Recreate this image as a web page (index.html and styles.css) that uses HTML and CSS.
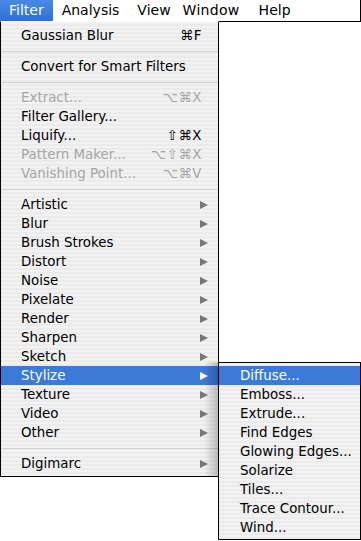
FILE: index.html
```html
<!DOCTYPE html>
<html>
<head>
<meta charset="utf-8">
<link rel="stylesheet" href="styles.css">
</head>
<body>
<div class="menubar">
  <span class="mb-item active">Filter</span>
  <span class="mb-item">Analysis</span>
  <span class="mb-item">View</span>
  <span class="mb-item">Window</span>
  <span class="mb-item">Help</span>
</div>
<div class="menu">
  <div class="item"><span>Gaussian Blur</span><span class="key">⌘F</span></div>
  <div class="sep"></div>
  <div class="item"><span>Convert for Smart Filters</span></div>
  <div class="sep"></div>
  <div class="item disabled"><span>Extract...</span><span class="key">⌥⌘X</span></div>
  <div class="item"><span>Filter Gallery...</span></div>
  <div class="item"><span>Liquify...</span><span class="key">⇧⌘X</span></div>
  <div class="item disabled"><span>Pattern Maker...</span><span class="key">⌥⇧⌘X</span></div>
  <div class="item disabled"><span>Vanishing Point...</span><span class="key">⌥⌘V</span></div>
  <div class="sep"></div>
  <div class="item sub"><span>Artistic</span><i class="arrow"></i></div>
  <div class="item sub"><span>Blur</span><i class="arrow"></i></div>
  <div class="item sub"><span>Brush Strokes</span><i class="arrow"></i></div>
  <div class="item sub"><span>Distort</span><i class="arrow"></i></div>
  <div class="item sub"><span>Noise</span><i class="arrow"></i></div>
  <div class="item sub"><span>Pixelate</span><i class="arrow"></i></div>
  <div class="item sub"><span>Render</span><i class="arrow"></i></div>
  <div class="item sub"><span>Sharpen</span><i class="arrow"></i></div>
  <div class="item sub"><span>Sketch</span><i class="arrow"></i></div>
  <div class="item sub selected"><span>Stylize</span><i class="arrow"></i>
    <div class="submenu">
      <div class="item selected"><span>Diffuse...</span></div>
      <div class="item"><span>Emboss...</span></div>
      <div class="item"><span>Extrude...</span></div>
      <div class="item"><span>Find Edges</span></div>
      <div class="item"><span>Glowing Edges...</span></div>
      <div class="item"><span>Solarize</span></div>
      <div class="item"><span>Tiles...</span></div>
      <div class="item"><span>Trace Contour...</span></div>
      <div class="item"><span>Wind...</span></div>
    </div>
  </div>
  <div class="item sub"><span>Texture</span><i class="arrow"></i></div>
  <div class="item sub"><span>Video</span><i class="arrow"></i></div>
  <div class="item sub"><span>Other</span><i class="arrow"></i></div>
  <div class="sep"></div>
  <div class="item sub"><span>Digimarc</span><i class="arrow"></i></div>
</div>
</body>
</html>
```
FILE: styles.css
```css
html, body {
  margin: 0;
  padding: 0;
  background: #ffffff;
}
body {
  font-family: "DejaVu Sans", "Liberation Sans", sans-serif;
  color: #000;
  width: 361px;
  height: 541px;
  overflow: hidden;
}
.menubar {
  display: flex;
  height: 21px;
  border-bottom: 1px solid #000;
  border-right: 1px solid #000;
  background: #fff;
  font-size: 14px;
  line-height: 21px;
}
.mb-item {
  padding: 0 9px;
}
.mb-item:nth-child(3) { padding-right: 3px; }
.mb-item:nth-child(4) { padding-right: 10px; letter-spacing: 0.3px; }
.mb-item.active {
  background: linear-gradient(#4a8ae6, #2f6fd3);
  color: #fff;
}
.menu {
  position: relative;
  width: 217px;
  margin-top: -1px;
  border: 1px solid #000;
  border-top: 1px solid #fff;
  padding: 4px 0 3px;
  background: repeating-linear-gradient(to bottom, #f2f2f2 0 2px, #ebebeb 2px 4px);
  font-size: 13.4px;
}
.menu::after {
  content: "";
  position: absolute;
  right: 0;
  top: 340px;
  bottom: 0;
  width: 14px;
  background: linear-gradient(to right, rgba(0,0,0,0), rgba(0,0,0,0.22));
  pointer-events: none;
}
.item {
  position: relative;
  display: flex;
  justify-content: space-between;
  align-items: center;
  height: 19px;
  line-height: 19px;
  padding: 0 16px 0 20px;
  white-space: nowrap;
}
.item.sub {
  padding-right: 10px;
}
.item.disabled {
  color: #a6a6a6;
}
.item.disabled .key {
  color: #a6a6a6;
}
.key {
  letter-spacing: 0.5px;
}
.item.selected {
  background: #3b7ad7;
  color: #fff;
}
.arrow {
  display: block;
  width: 0;
  height: 0;
  border-top: 4.5px solid transparent;
  border-bottom: 4.5px solid transparent;
  border-left: 8px solid #777;
}
.item.selected > .arrow {
  border-left-color: #fff;
}
.sep {
  height: 12px;
  position: relative;
}
.sep::before {
  content: "";
  display: block;
  position: relative;
  top: 6px;
  height: 1px;
  background: #d2d2d2;
}
.submenu {
  position: absolute;
  left: 217px;
  top: -4px;
  width: 141px;
  border: 1px solid #000;
  padding: 3px 0 2px;
  background: repeating-linear-gradient(to bottom, #f2f2f2 0 2px, #ebebeb 2px 4px);
  color: #000;
  z-index: 2;
}
.submenu .item {
  padding: 0 6px 0 21px;
}
.submenu .item.selected {
  color: #fff;
}
```
